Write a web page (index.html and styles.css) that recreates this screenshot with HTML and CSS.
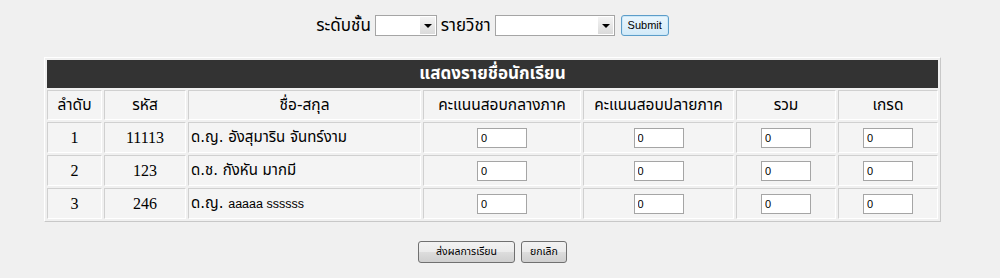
FILE: index.html
```html
<!DOCTYPE html>
<html>
<head>
<meta charset="utf-8">
<title>แสดงรายชื่อนักเรียน</title>
<link rel="stylesheet" href="styles.css">
</head>
<body>
<div class="page">
  <form class="filter">
    <label>ระดับชั้น</label>
    <span class="select s-level"><span class="arrow"></span></span>
    <label>รายวิชา</label>
    <span class="select s-subject"><span class="arrow"></span></span>
    <button type="button" class="btn-submit">Submit</button>
  </form>

  <table class="grades">
    <colgroup>
      <col class="c-no"><col class="c-id"><col class="c-name"><col class="c-mid">
      <col class="c-fin"><col class="c-sum"><col class="c-grade">
    </colgroup>
    <tr><th colspan="7" class="caption">แสดงรายชื่อนักเรียน</th></tr>
    <tr class="head">
      <td>ลำดับ</td>
      <td>รหัส</td>
      <td>ชื่อ-สกุล</td>
      <td>คะแนนสอบกลางภาค</td>
      <td>คะแนนสอบปลายภาค</td>
      <td>รวม</td>
      <td>เกรด</td>
    </tr>
    <tr>
      <td class="num">1</td><td class="num">11113</td><td class="name">ด.ญ. อังสุมาริน จันทร์งาม</td>
      <td><input type="text" value="0"></td><td><input type="text" value="0"></td>
      <td><input type="text" value="0"></td><td><input type="text" value="0"></td>
    </tr>
    <tr>
      <td class="num">2</td><td class="num">123</td><td class="name">ด.ช. กังหัน มากมี</td>
      <td><input type="text" value="0"></td><td><input type="text" value="0"></td>
      <td><input type="text" value="0"></td><td><input type="text" value="0"></td>
    </tr>
    <tr>
      <td class="num">3</td><td class="num">246</td><td class="name">ด.ญ. <span class="latin">aaaaa ssssss</span></td>
      <td><input type="text" value="0"></td><td><input type="text" value="0"></td>
      <td><input type="text" value="0"></td><td><input type="text" value="0"></td>
    </tr>
  </table>

  <div class="actions">
    <button type="button" class="btn btn-send">ส่งผลการเรียน</button>
    <button type="button" class="btn btn-cancel">ยกเลิก</button>
  </div>
</div>
</body>
</html>
```

FILE: styles.css
```css
body{margin:0;background:#F0F0F0;color:#000;font-family:"DejaVu Sans","Noto Sans Thai",sans-serif;}
.page{width:985px;}

.filter{display:flex;justify-content:center;align-items:center;gap:4px;padding-top:15px;height:21px;font-size:17px;}
.filter label{line-height:21px;}
.select{display:inline-flex;justify-content:flex-end;height:19px;border:1px solid #A5A5A5;background:#FFF;box-sizing:content-box;}
.s-level{width:60px;}
.s-subject{width:118px;}
.select .arrow{width:15px;height:17px;margin:1px;background:linear-gradient(#F4F4F4,#DADADA);position:relative;}
.select .arrow:after{content:"";position:absolute;left:4px;top:7px;border-left:4px solid transparent;border-right:4px solid transparent;border-top:4px solid #000;}
.btn-submit{margin-left:2px;width:48px;height:21px;padding:0;font:11px/1 "Liberation Sans",Arial,sans-serif;color:#000;border:1px solid #5C9DC9;border-radius:3px;background:linear-gradient(#EAF6FD,#D3EAF8);box-shadow:inset 0 0 0 1px #CDE8F8;}

.grades{width:897px;margin:21px 0 0 44px;table-layout:fixed;border-collapse:separate;border-spacing:2px;border:1px solid;border-color:#FFF #C8C8C8 #C8C8C8 #FFF;}
.grades td,.grades th{border:1px solid;border-color:#D0D0D0 #FFF #FFF #D0D0D0;background:#F4F4F4;text-align:center;padding:0;height:28px;white-space:nowrap;overflow:hidden;}
.grades th.caption{background:#333;border-color:#333;color:#FFF;font-size:17px;font-weight:bold;height:26px;}
.grades .head td{font-size:15.5px;height:28px;}
.grades td.num{font:16px "Liberation Serif","Times New Roman",serif;height:29px;}
.grades td.name{text-align:left;padding-left:2px;font-size:15px;}
.grades .latin{font:12.5px "Liberation Sans",Arial,sans-serif;}
.c-no{width:55px;}
.c-id{width:82px;}
.c-name{width:233px;}
.c-mid{width:158px;}
.c-fin{width:151px;}
.c-sum{width:100px;}
.c-grade{width:100px;}
.grades input{width:50px;height:20px;box-sizing:border-box;border:1px solid #A5A5A5;background:#FFF;padding:0 3px;font:11px "Liberation Sans",Arial,sans-serif;color:#000;}

.actions{display:flex;justify-content:center;gap:6px;margin-top:19px;}
.btn{height:22px;padding:0;font-size:10.5px;color:#000;border:1px solid #707070;border-radius:3px;background:linear-gradient(#F2F2F2 0,#EBEBEB 50%,#DDD 50%,#CFCFCF 100%);font-family:"DejaVu Sans","Noto Sans Thai",sans-serif;}
.btn-send{width:97px;}
.btn-cancel{width:46px;}
```
